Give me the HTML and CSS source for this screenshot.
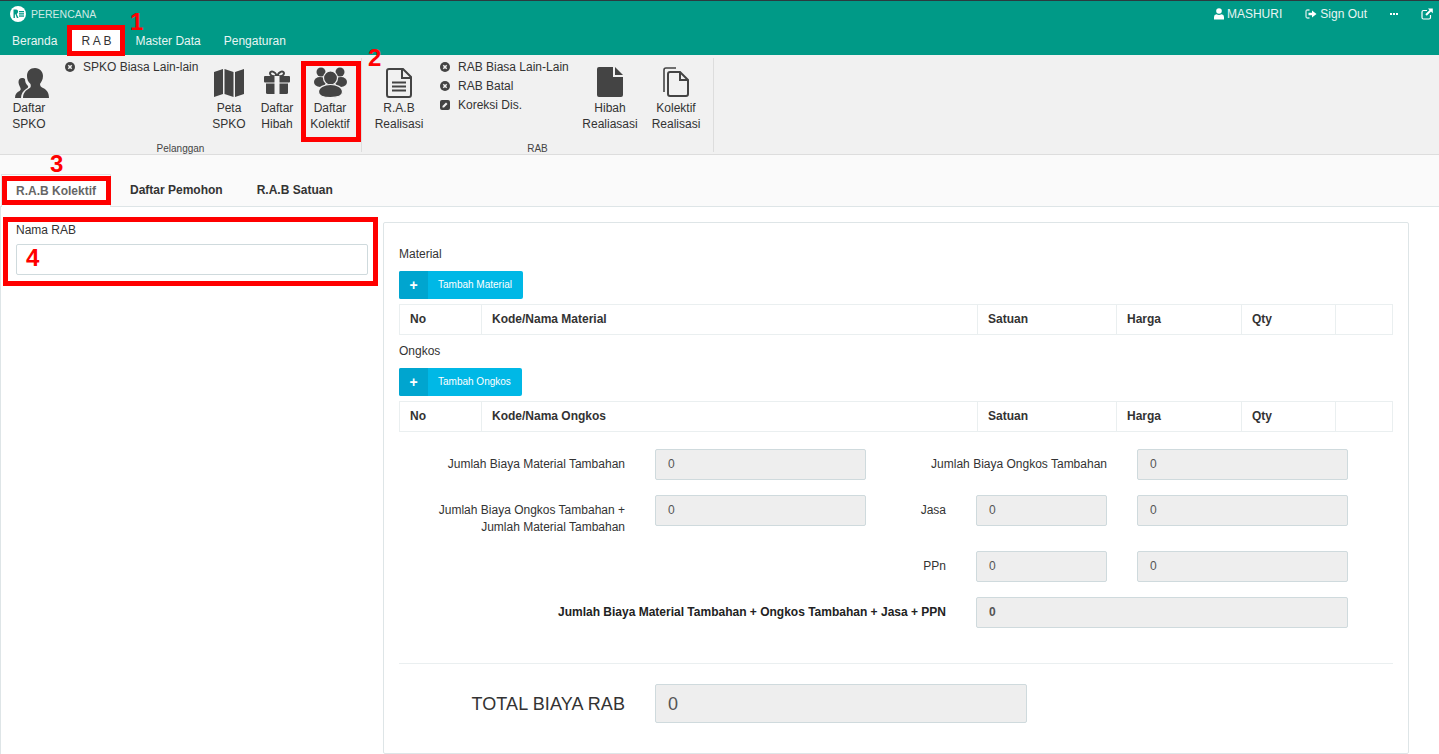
FILE: index.html
```html
<!DOCTYPE html>
<html lang="en">
<head>
  <meta charset="UTF-8">
  <title>Perencana</title>
  <link rel="stylesheet" href="styles.css">
</head>
<body>
  <header class="topbar">
    <div class="topbar-row">
      <div class="brand">
        <svg class="logo" viewBox="0 0 16 16"><circle cx="8" cy="8" r="8" fill="#fff"/><path d="M3.500 3.500h2.600q2 0 2 2t-1.400 2.400L8.500 12H6.900L5.500 8.300H4.900V12H3.500z" fill="#009a87"/><rect x="9" y="5" width="5" height="1.300" fill="#009a87"/><rect x="9" y="7.200" width="5" height="1.300" fill="#009a87"/><rect x="9" y="9.400" width="5" height="1.300" fill="#009a87"/></svg>
        <span>PERENCANA</span>
      </div>
      <div class="top-links">
        <span class="top-link user"><svg class="ti" viewBox="0 0 12 12"><circle cx="6" cy="3" r="2.800" fill="#fff"/><path d="M1 11.500V9q0-2.500 2.500-2.800 2.500 1.500 5 0Q11 6.500 11 9v2.500z" fill="#fff"/></svg>MASHURI</span>
        <span class="top-link signout"><svg class="ti" viewBox="0 0 12 12"><path d="M4.500 2H2.500Q1 2 1 3.500v5Q1 10 2.500 10h2" fill="none" stroke="#cfe9e5" stroke-width="1.300"/><path d="M3.500 4.700h3.500V2.500L11.500 6 7 9.500V7.300H3.500z" fill="#fff"/></svg>Sign Out</span>
        <span class="top-link dots"><i></i><i></i><i></i></span>
        <span class="top-link ext"><svg class="ti" viewBox="0 0 12 12"><path d="M9.500 7v2.500q0 1.500-1.500 1.500H2.500Q1 11 1 9.500V4q0-1.500 1.500-1.500H6" fill="none" stroke="#fff" stroke-width="1.200"/><path d="M7 .5h4.800v4.800L10 3.600 5.800 7.800 4.300 6.300 8.500 2.200z" fill="#fff"/></svg></span>
      </div>
    </div>
    <nav class="mainnav">
      <a>Beranda</a>
      <a class="active">R A B</a>
      <a>Master Data</a>
      <a>Pengaturan</a>
    </nav>
  </header>

  <section class="ribbon">
    <div class="rb-group rb-first">
      <div class="rb-items">
        <div class="rb-btn w58">
          <svg class="rb-icon ic-person" viewBox="0 -2 34 32"><path d="M20 0C25 0 28 4 28 8C28 12 26 14 25 16C25 18 26 19 28 20C31 21.500 34 24 34 30H8C8 25 11 22 14 20.500C16 19.500 16 18 15.500 16C13 14 12 11 12 8C12 3 15 0 20 0z" fill="#444"/><path d="M7 10C8.500 10 9.500 10.500 10 11C10 14 11 16 13 18C13.500 19 13 20 11 21C8 23 6 26 6 30H0C0 26 2 24 4.500 23C6 22 6 21 5 19C4 17 3.500 15 3.500 14C3.500 11.500 5 10 7 10z" fill="#444"/></svg>
          <span>Daftar<br>SPKO</span>
        </div>
        <ul class="rb-list w141">
          <li><svg class="li" viewBox="0 0 10 10"><circle cx="5" cy="5" r="5" fill="#444"/><path d="M3.300 3.300l3.400 3.400M6.700 3.300L3.300 6.700" stroke="#f1f1f1" stroke-width="1.500"/></svg>SPKO Biasa Lain-lain</li>
        </ul>
        <div class="rb-btn w46">
          <svg class="rb-icon" viewBox="0 -3 30 32"><path d="M0 3L9 0V25L0 28zM10.500 0L19.500 3V28L10.500 25zM21 3L30 0V25L21 28z" fill="#444"/></svg>
          <span>Peta<br>SPKO</span>
        </div>
        <div class="rb-btn w50">
          <svg class="rb-icon" viewBox="0 -4 26 32"><path d="M13 6.500C10 6.500 6 6 6 3.300S11 .5 13 6.500C15 .5 20 .5 20 3.300S16 6.500 13 6.500z" fill="none" stroke="#444" stroke-width="2"/><rect y="6" width="26" height="6.500" rx="1" fill="#444"/><path d="M2 13.500H24V22.500Q24 24 22.500 24H3.500Q2 24 2 22.500z" fill="#444"/><rect x="10.500" y="6" width="5" height="18" fill="#f1f1f1"/></svg>
          <span>Daftar<br>Hibah</span>
        </div>
        <div class="rb-btn w56">
          <svg class="rb-icon" viewBox="0 -1 33 32"><circle cx="7" cy="5" r="4.500" fill="#444"/><circle cx="26" cy="5" r="4.500" fill="#444"/><ellipse cx="6" cy="15" rx="6" ry="5" fill="#444"/><ellipse cx="27" cy="15" rx="6" ry="5" fill="#444"/><circle cx="16.500" cy="11" r="7" fill="#444" stroke="#f1f1f1" stroke-width="1.200"/><path d="M4.500 25C4.500 20 10 17.500 16.500 17.500C23 17.500 28.500 20 28.500 25C28.500 29 24 30.500 16.500 30.500C9 30.500 4.500 29 4.500 25z" fill="#444" stroke="#f1f1f1" stroke-width="1.200"/></svg>
          <span>Daftar<br>Kolektif</span>
        </div>
      </div>
      <div class="rb-title">Pelanggan</div>
    </div>
    <div class="rb-group rb-second">
      <div class="rb-items">
        <div class="rb-btn w74">
          <svg class="rb-icon" viewBox="0 -2 26 32"><path d="M3 1H17L25 9V26.500Q25 29 23 29H3Q1 29 1 26.500V3Q1 1 3 1z" fill="none" stroke="#444" stroke-width="2"/><path d="M16 1V10H25" fill="none" stroke="#444" stroke-width="2"/><path d="M6 14.500H20M6 18.500H20M6 22.500H20" stroke="#444" stroke-width="2"/></svg>
          <span>R.A.B<br>Realisasi</span>
        </div>
        <ul class="rb-list w143">
          <li><svg class="li" viewBox="0 0 10 10"><circle cx="5" cy="5" r="5" fill="#444"/><path d="M3.300 3.300l3.400 3.400M6.700 3.300L3.300 6.700" stroke="#f1f1f1" stroke-width="1.500"/></svg>RAB Biasa Lain-Lain</li>
          <li><svg class="li" viewBox="0 0 10 10"><circle cx="5" cy="5" r="5" fill="#444"/><path d="M3.300 3.300l3.400 3.400M6.700 3.300L3.300 6.700" stroke="#f1f1f1" stroke-width="1.500"/></svg>RAB Batal</li>
          <li><svg class="li" viewBox="0 0 10 10"><rect width="10" height="10" rx="2" fill="#444"/><path d="M2.500 7.500V6l3.500-3.500 1.500 1.500L4 7.500z" fill="#f1f1f1"/></svg>Koreksi Dis.</li>
        </ul>
        <div class="rb-btn w62">
          <svg class="rb-icon" viewBox="0 -1 26 32"><path d="M2 0H16V10H26V28Q26 30 24 30H2Q0 30 0 28V2Q0 0 2 0z" fill="#444"/><path d="M18 0L26 8H18z" fill="#444"/></svg>
          <span>Hibah<br>Realiasasi</span>
        </div>
        <div class="rb-btn w70">
          <svg class="rb-icon" viewBox="0 -1 26 32"><path d="M1 25V3Q1 1 3 1H13" fill="none" stroke="#444" stroke-width="1.600"/><path d="M7 5H17L25 13V27Q25 29 23 29H7Q5 29 5 27V7Q5 5 7 5z" fill="none" stroke="#444" stroke-width="2"/><path d="M17 5V13H25" fill="none" stroke="#444" stroke-width="2"/></svg>
          <span>Kolektif<br>Realisasi</span>
        </div>
      </div>
      <div class="rb-title">RAB</div>
    </div>
  </section>

  <div class="tabs">
    <a class="tab active">R.A.B Kolektif</a>
    <a class="tab">Daftar Pemohon</a>
    <a class="tab">R.A.B Satuan</a>
  </div>

  <main class="content">
    <aside class="side">
      <label class="side-label">Nama RAB</label>
      <input class="side-input" type="text">
    </aside>
    <section class="panel">
      <div class="sub-title">Material</div>
      <div class="add-btn"><span class="add-icon">+</span><span class="add-text">Tambah Material</span></div>
      <table class="items">
        <tr><th class="c-no">No</th><th class="c-name">Kode/Nama Material</th><th class="c-sat">Satuan</th><th class="c-harga">Harga</th><th class="c-qty">Qty</th><th></th></tr>
      </table>
      <div class="sub-title">Ongkos</div>
      <div class="add-btn"><span class="add-icon">+</span><span class="add-text">Tambah Ongkos</span></div>
      <table class="items">
        <tr><th class="c-no">No</th><th class="c-name">Kode/Nama Ongkos</th><th class="c-sat">Satuan</th><th class="c-harga">Harga</th><th class="c-qty">Qty</th><th></th></tr>
      </table>

      <div class="sums">
        <label class="sum-label">Jumlah Biaya Material Tambahan</label>
        <div class="ro">0</div>
        <label class="sum-label span-34">Jumlah Biaya Ongkos Tambahan</label>
        <div class="ro col-5">0</div>

        <label class="sum-label">Jumlah Biaya Ongkos Tambahan +<br>Jumlah Material Tambahan</label>
        <div class="ro">0</div>
        <label class="sum-label">Jasa</label>
        <div class="ro">0</div>
        <div class="ro">0</div>

        <label class="sum-label col-3">PPn</label>
        <div class="ro">0</div>
        <div class="ro">0</div>

        <label class="sum-label span-123 strong">Jumlah Biaya Material Tambahan + Ongkos Tambahan + Jasa + PPN</label>
        <div class="ro span-45 strong">0</div>
      </div>

      <hr class="rule">

      <div class="total">
        <label class="total-label">TOTAL BIAYA RAB</label>
        <div class="ro total-val">0</div>
      </div>
    </section>
  </main>

  <!-- annotations drawn on top of the screenshot -->
  <div class="mark m1"></div><b class="num n1">1</b>
  <div class="mark m2"></div><b class="num n2">2</b>
  <div class="mark m3"></div><b class="num n3">3</b>
  <div class="mark m4"></div><b class="num n4">4</b>
</body>
</html>
```

FILE: styles.css
```css
html,body {
  margin: 0;
  padding: 0;
  height: 754px;
  overflow: hidden;
  font-family: "Liberation Sans", Arial, sans-serif;
  font-size: 12px;
  color: #333;
  background: #fff;
}
ul {
  margin: 0;
  padding: 0;
  list-style: none;
}

/* top bar */
.topbar {
  height: 54px;
  background: #009a87;
  border-top: 1px solid #2b3a3f;
  color: #fff;
}
.topbar-row {
  display: flex;
  justify-content: space-between;
  align-items: center;
  height: 26px;
  padding: 0 6px 0 10px;
}
.brand {
  display: flex;
  align-items: center;
  gap: 5px;
  font-size: 10.5px;
  color: #cfe9e5;
}
.logo {
  width: 16px;
  height: 16px;
}
.top-links {
  display: flex;
  align-items: center;
}
.top-link {
  display: flex;
  align-items: center;
  gap: 3px;
  color: #e8f5f3;
}
.ti {
  width: 12px;
  height: 12px;
}
.user {
  margin-right: 23px;
  gap: 2px;
}
.signout {
  margin-right: 23px;
}
.dots {
  gap: 1px;
  margin-right: 23px;
}
.dots i {
  width: 2px;
  height: 2px;
  background: #fff;
}
.mainnav {
  display: flex;
  height: 28px;
  padding-left: 12px;
  gap: 23px;
  line-height: 28px;
  color: #e8f5f3;
}
.mainnav a.active {
  background: #fff;
  color: #333;
  margin: 0 -13px 0 -13px;
  padding: 0 14px;
}

/* ribbon */
.ribbon {
  display: flex;
  height: 99px;
  background: #f1f1f1;
  border-bottom: 1px solid #ddd;
}
.rb-group {
  display: flex;
  flex-direction: column;
  margin-top: 3px;
  margin-bottom: 2px;
  border-right: 1px solid #ddd;
}
.rb-first {
  width: 361px;
}
.rb-second {
  width: 351px;
}
.rb-items {
  display: flex;
  flex: 1;
}
.rb-btn {
  display: flex;
  flex-direction: column;
  align-items: center;
  text-align: center;
  line-height: 16px;
  color: #333;
}
.rb-icon {
  height: 32px;
  margin: 8px 0 2px;
}
.ic-person {
  margin-left: 6px;
}
.w46 { width: 46px; }
.w50 { width: 50px; }
.w56 { width: 56px; }
.w58 { width: 58px; }
.w62 { width: 62px; }
.w70 { width: 70px; }
.w74 { width: 74px; }
.rb-list {
  margin-top: -1px;
}
.rb-list li {
  display: flex;
  align-items: center;
  gap: 8px;
  height: 19px;
}
.w141 {
  width: 141px;
  margin-left: 7px;
}
.w143 {
  width: 139px;
  padding-left: 4px;
}
.li {
  width: 10px;
  height: 10px;
}
.rb-title {
  height: 12px;
  line-height: 17px;
  text-align: center;
  font-size: 10px;
  color: #444;
}

/* tabs */
.tabs {
  display: flex;
  height: 51px;
  padding-left: 1px;
  align-items: flex-end;
  background: #fafafa;
  border-bottom: 1px solid #dee5e7;
}
.tab {
  padding: 0 17px;
  height: 34px;
  line-height: 36px;
  font-weight: bold;
  color: #333;
}
.tab.active {
  box-sizing: border-box;
  height: 33px;
  line-height: 32px;
  margin-bottom: -1px;
  color: #666;
  background: #fff;
  padding: 0 14px;
  margin-right: 2px;
  border: 1px solid #dee5e7;
  border-bottom: 0;
}

/* content */
.content {
  display: flex;
  align-items: flex-start;
  height: 547px;
  border-left: 1px solid #dee5e7;
}
.side {
  width: 352px;
  padding: 15px 15px 0;
}
.side-label {
  display: block;
  margin-bottom: 5px;
  line-height: 17px;
}
.side-input {
  display: block;
  box-sizing: border-box;
  width: 352px;
  height: 31px;
  border: 1px solid #cfdadd;
  border-radius: 2px;
  background: #fff;
}
.panel {
  box-sizing: border-box;
  width: 1026px;
  height: 532px;
  margin-top: 15px;
  padding: 24px 15px 0;
  border: 1px solid #dee5e7;
  border-radius: 2px;
}
.sub-title {
  line-height: 15px;
  margin-bottom: 9px;
}
.add-btn {
  display: inline-flex;
  height: 28px;
  line-height: 28px;
  border-radius: 2px;
  overflow: hidden;
  color: #fff;
  background: #00b8e6;
  font-size: 10px;
  vertical-align: top;
}
.add-icon {
  width: 29px;
  text-align: center;
  background: #00a5cf;
  font-size: 14px;
  font-weight: bold;
}
.add-text {
  padding: 0 11px 0 10px;
}
.items {
  width: 994px;
  margin: 5px 0 9px;
  border-collapse: collapse;
  table-layout: fixed;
}
.items tr {
  height: 30px;
}
.items th {
  height: 27px;
  padding: 0 10px 2px;
  box-sizing: content-box;
  text-align: left;
  border: 1px solid #eaeff0;
}
.c-no { width: 61px; }
.c-name { width: 475px; }
.c-sat { width: 118px; }
.c-harga { width: 104px; }
.c-qty { width: 73px; }

/* sums */
.sums {
  display: grid;
  grid-template-columns: 226px 211px 50px 131px 211px;
  column-gap: 30px;
  row-gap: 15px;
  margin-top: 17px;
}
.sum-label {
  padding-top: 7px;
  text-align: right;
  line-height: 17px;
}
.ro {
  box-sizing: border-box;
  height: 31px;
  padding: 0 12px;
  line-height: 29px;
  color: #555;
  background: #eee;
  border: 1px solid #cfdadd;
  border-radius: 2px;
}
.strong {
  font-weight: bold;
  color: #222;
}
.ro.strong {
  color: #555;
}
.span-34 { grid-column: 3 / 5; white-space: nowrap; }
.col-5 { grid-column: 5; }
.col-3 { grid-column: 3; }
.span-123 { grid-column: 1 / 4; }
.span-45 { grid-column: 4 / 6; }
.rule {
  margin: 35px 0 20px;
  border: 0;
  border-top: 1px solid #eaeff0;
}
.total {
  display: flex;
  gap: 30px;
}
.total-label {
  width: 226px;
  text-align: right;
  font-size: 18px;
  letter-spacing: .1px;
  line-height: 41px;
}
.total-val {
  width: 372px;
  height: 39px;
  line-height: 38px;
  font-size: 18px;
}

/* red annotations */
.mark {
  position: absolute;
  box-sizing: border-box;
  border: 5px solid #f00;
}
.m1 { left: 67px; top: 25px; width: 58px; height: 31px; }
.m2 { left: 301px; top: 61px; width: 60px; height: 81px; }
.m3 { left: 2px; top: 176px; width: 109px; height: 29px; }
.m4 { left: 3px; top: 217px; width: 375px; height: 69px; }
.num {
  position: absolute;
  font-size: 24px;
  line-height: 24px;
  color: #f00;
}
.n1 { left: 130px; top: 10px; }
.n2 { left: 368px; top: 46px; }
.n3 { left: 50px; top: 152px; }
.n4 { left: 26px; top: 246px; }
```
